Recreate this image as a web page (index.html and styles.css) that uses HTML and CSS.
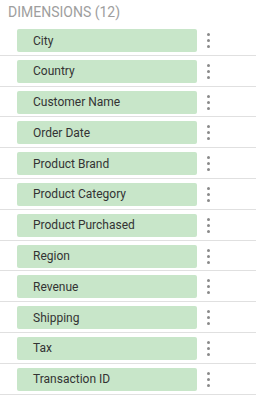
FILE: index.html
```html
<!DOCTYPE html>
<html>
<head>
<meta charset="utf-8">
<link rel="stylesheet" href="styles.css">
</head>
<body>
<div class="panel">
  <div class="title">DIMENSIONS (12)</div>
  <ul class="list">
    <li class="row"><span class="chip">City</span><span class="more"><i></i><i></i><i></i></span></li>
    <li class="row"><span class="chip">Country</span><span class="more"><i></i><i></i><i></i></span></li>
    <li class="row"><span class="chip">Customer Name</span><span class="more"><i></i><i></i><i></i></span></li>
    <li class="row"><span class="chip">Order Date</span><span class="more"><i></i><i></i><i></i></span></li>
    <li class="row"><span class="chip">Product Brand</span><span class="more"><i></i><i></i><i></i></span></li>
    <li class="row"><span class="chip">Product Category</span><span class="more"><i></i><i></i><i></i></span></li>
    <li class="row"><span class="chip">Product Purchased</span><span class="more"><i></i><i></i><i></i></span></li>
    <li class="row"><span class="chip">Region</span><span class="more"><i></i><i></i><i></i></span></li>
    <li class="row"><span class="chip">Revenue</span><span class="more"><i></i><i></i><i></i></span></li>
    <li class="row"><span class="chip">Shipping</span><span class="more"><i></i><i></i><i></i></span></li>
    <li class="row"><span class="chip">Tax</span><span class="more"><i></i><i></i><i></i></span></li>
    <li class="row"><span class="chip">Transaction ID</span><span class="more"><i></i><i></i><i></i></span></li>
  </ul>
</div>
</body>
</html>
```
FILE: styles.css
```css
html, body {
  margin: 0;
  padding: 0;
  background: #ffffff;
}
.panel {
  width: 256px;
  font-family: Roboto, "Liberation Sans", sans-serif;
}
.title {
  height: 25px;
  padding-left: 8px;
  box-sizing: border-box;
  padding-top: 4px;
  font-size: 14px;
  line-height: 16px;
  color: #9e9e9e;
}
.list {
  list-style: none;
  margin: 0;
  padding: 0;
}
.row {
  display: flex;
  align-items: center;
  height: 30.8px;
  box-sizing: border-box;
  padding: 4px 0 2.8px 17px;
  border-bottom: 1px solid #e0e0e0;
}
.chip {
  width: 180px;
  height: 23px;
  box-sizing: border-box;
  background: #c8e6c9;
  border-radius: 2px;
  padding-left: 16px;
  display: flex;
  align-items: center;
  font-size: 12px;
  color: #333333;
}
.more {
  display: flex;
  flex-direction: column;
  align-items: center;
  gap: 3px;
  margin-left: 10px;
  width: 3px;
}
.more i {
  display: block;
  width: 3px;
  height: 3px;
  border-radius: 50%;
  background: #8a8a8a;
}
```
